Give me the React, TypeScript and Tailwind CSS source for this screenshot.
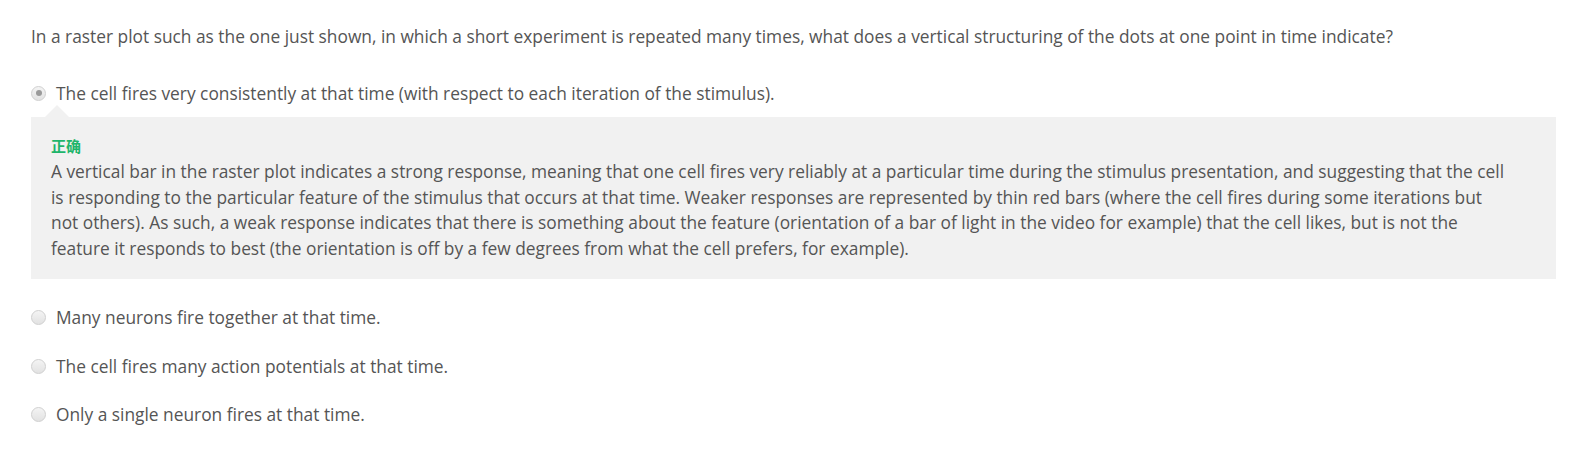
import React from "react";

const font = { fontFamily: '"Open Sans", "Noto Sans CJK SC", sans-serif' };

function Radio({ checked }: { checked?: boolean }) {
  return (
    <span className="relative inline-flex h-[15px] w-[15px] shrink-0 items-center justify-center rounded-full border border-[#d0d0d0] bg-gradient-to-b from-[#f4f4f4] to-[#e2e2e2]">
      {checked && <span className="h-[6px] w-[6px] rounded-full bg-[#9a9a9a]" />}
    </span>
  );
}

export default function App() {
  return (
    <div className="min-h-[462px] w-[1581px] bg-white text-[17.33px] text-[#555555]" style={font}>
      <div className="px-[31px] pt-[24px]">
        <p className="leading-[25.5px]">
          In a raster plot such as the one just shown, in which a short experiment is repeated many times, what does a vertical structuring of the dots at one point in time indicate?
        </p>

        <div className="mt-[31px]">
          <label className="flex items-center gap-[10px] leading-[25.5px]">
            <Radio checked />
            <span>The cell fires very consistently at that time (with respect to each iteration of the stimulus).</span>
          </label>
          <div className="relative mt-[11px] w-[1525px] bg-[#f1f1f1] pb-[18px] pl-[20px] pr-[43px] pt-[16px]">
            <span className="absolute left-[14px] top-[-12px] h-0 w-0 border-x-[12px] border-b-[12px] border-x-transparent border-b-[#f1f1f1]" />
            <div className="text-[15px] font-semibold leading-[26px] text-[#1fb56b]">正确</div>
            <p className="leading-[25.5px]">
              A vertical bar in the raster plot indicates a strong response, meaning that one cell fires very reliably at a particular time during the stimulus presentation, and suggesting that the cell is responding to the particular feature of the stimulus that occurs at that time. Weaker responses are represented by thin red bars (where the cell fires during some iterations but not others). As such, a weak response indicates that there is something about the feature (orientation of a bar of light in the video for example) that the cell likes, but is not the feature it responds to best (the orientation is off by a few degrees from what the cell prefers, for example).
            </p>
          </div>
        </div>

        <div className="mt-[26px] flex flex-col gap-[23px]">
          {[
            "Many neurons fire together at that time.",
            "The cell fires many action potentials at that time.",
            "Only a single neuron fires at that time.",
          ].map((t) => (
            <label key={t} className="flex items-center gap-[10px] leading-[25.5px]">
              <Radio />
              <span>{t}</span>
            </label>
          ))}
        </div>
      </div>
    </div>
  );
}
